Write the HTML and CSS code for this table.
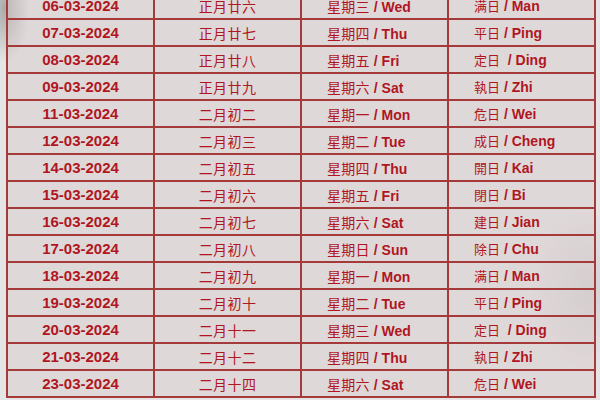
FILE: index.html
```html
<!DOCTYPE html>
<html lang="zh">
<head>
<meta charset="utf-8">
<title>2024 三月 日历</title>
<link rel="stylesheet" href="styles.css">
</head>
<body>
<div class="page">
<table class="cal">
<colgroup><col><col><col><col></colgroup>
<tbody>
<tr><td class="d">06-03-2024</td><td class="l">正月廿六</td><td class="w"><span class="zh">星期三</span> / Wed</td><td class="o"><span class="zh">满日</span> / Man</td></tr>
<tr><td class="d">07-03-2024</td><td class="l">正月廿七</td><td class="w"><span class="zh">星期四</span> / Thu</td><td class="o"><span class="zh">平日</span> / Ping</td></tr>
<tr><td class="d">08-03-2024</td><td class="l">正月廿八</td><td class="w"><span class="zh">星期五</span> / Fri</td><td class="o"><span class="zh">定日</span>&nbsp; / Ding</td></tr>
<tr><td class="d">09-03-2024</td><td class="l">正月廿九</td><td class="w"><span class="zh">星期六</span> / Sat</td><td class="o"><span class="zh">執日</span> / Zhi</td></tr>
<tr><td class="d">11-03-2024</td><td class="l">二月初二</td><td class="w"><span class="zh">星期一</span> / Mon</td><td class="o"><span class="zh">危日</span> / Wei</td></tr>
<tr><td class="d">12-03-2024</td><td class="l">二月初三</td><td class="w"><span class="zh">星期二</span> / Tue</td><td class="o"><span class="zh">成日</span> / Cheng</td></tr>
<tr><td class="d">14-03-2024</td><td class="l">二月初五</td><td class="w"><span class="zh">星期四</span> / Thu</td><td class="o"><span class="zh">開日</span> / Kai</td></tr>
<tr><td class="d">15-03-2024</td><td class="l">二月初六</td><td class="w"><span class="zh">星期五</span> / Fri</td><td class="o"><span class="zh">閉日</span> / Bi</td></tr>
<tr><td class="d">16-03-2024</td><td class="l">二月初七</td><td class="w"><span class="zh">星期六</span> / Sat</td><td class="o"><span class="zh">建日</span> / Jian</td></tr>
<tr><td class="d">17-03-2024</td><td class="l">二月初八</td><td class="w"><span class="zh">星期日</span> / Sun</td><td class="o"><span class="zh">除日</span> / Chu</td></tr>
<tr><td class="d">18-03-2024</td><td class="l">二月初九</td><td class="w"><span class="zh">星期一</span> / Mon</td><td class="o"><span class="zh">满日</span> / Man</td></tr>
<tr><td class="d">19-03-2024</td><td class="l">二月初十</td><td class="w"><span class="zh">星期二</span> / Tue</td><td class="o"><span class="zh">平日</span> / Ping</td></tr>
<tr><td class="d">20-03-2024</td><td class="l">二月十一</td><td class="w"><span class="zh">星期三</span> / Wed</td><td class="o"><span class="zh">定日</span>&nbsp; / Ding</td></tr>
<tr><td class="d">21-03-2024</td><td class="l">二月十二</td><td class="w"><span class="zh">星期四</span> / Thu</td><td class="o"><span class="zh">執日</span> / Zhi</td></tr>
<tr><td class="d">23-03-2024</td><td class="l">二月十四</td><td class="w"><span class="zh">星期六</span> / Sat</td><td class="o"><span class="zh">危日</span> / Wei</td></tr>
</tbody>
</table>
</div>
</body>
</html>
```
FILE: styles.css
```css
html, body {
  margin: 0;
  padding: 0;
  width: 600px;
  height: 400px;
  overflow: hidden;
}
body {
  background:
    radial-gradient(ellipse 24px 55px at 5px 8px, rgba(110,110,110,0.5), rgba(110,110,110,0) 100%),
    radial-gradient(ellipse 60px 80px at 590px 290px, rgba(150,150,150,0.22), rgba(150,150,150,0) 100%),
    #e6e5e5;
  font-family: "Liberation Sans", Arial, "Noto Sans CJK SC", sans-serif;
  color: #b0161f;
}
.page {
  padding-left: 6px;
  margin-top: -9px;
}
.cal {
  border-collapse: collapse;
  table-layout: fixed;
  width: 588px;
  background: rgba(214, 200, 200, 0.45);
}
.cal col {
  width: 147px;
}
.cal td {
  border: 2px solid #a53a3b;
  height: 25px;
  padding: 0;
  white-space: nowrap;
  vertical-align: middle;
}
.d {
  text-align: center;
  font-weight: bold;
  font-size: 15px;
}
.l {
  text-align: center;
  font-family: "Noto Sans CJK SC", "Noto Sans CJK TC", sans-serif;
  font-size: 14px;
  letter-spacing: 0.4px;
}
.w, .o {
  padding-left: 25px !important;
  font-weight: bold;
  font-size: 14px;
}
.zh {
  font-family: "Noto Sans CJK TC", "Noto Sans CJK SC", sans-serif;
  font-weight: normal;
  font-size: 14px;
  letter-spacing: 0.3px;
}
.o .zh {
  font-size: 13px;
  letter-spacing: 0;
}
```
